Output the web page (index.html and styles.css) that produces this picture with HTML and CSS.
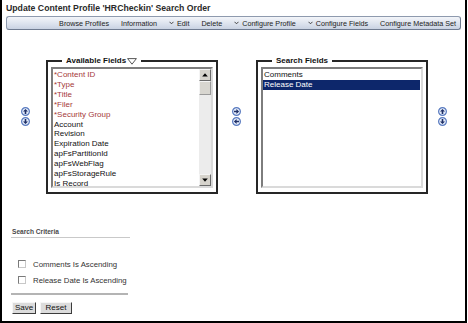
FILE: index.html
```html
<!DOCTYPE html>
<html>
<head>
<meta charset="utf-8">
<link rel="stylesheet" href="styles.css">
</head>
<body>
<div class="page">
  <h1 class="title">Update Content Profile 'HRCheckin' Search Order</h1>
  <nav class="toolbar">
    <span class="tb">Browse Profiles</span>
    <span class="tb">Information</span>
    <span class="tb"><svg class="chev" width="5" height="4" viewBox="0 0 5 4"><polyline points="0.5,0.8 2.5,2.8 4.5,0.8" fill="none" stroke="#333" stroke-width="0.9"/></svg>Edit</span>
    <span class="tb">Delete</span>
    <span class="tb"><svg class="chev" width="5" height="4" viewBox="0 0 5 4"><polyline points="0.5,0.8 2.5,2.8 4.5,0.8" fill="none" stroke="#333" stroke-width="0.9"/></svg>Configure Profile</span>
    <span class="tb"><svg class="chev" width="5" height="4" viewBox="0 0 5 4"><polyline points="0.5,0.8 2.5,2.8 4.5,0.8" fill="none" stroke="#333" stroke-width="0.9"/></svg>Configure Fields</span>
    <span class="tb">Configure Metadata Set</span>
  </nav>

  <div class="fields">
    <div class="movers movers-left">
      <svg class="mv" width="9" height="9" viewBox="0 0 9 9"><circle cx="4.5" cy="4.5" r="3.9" fill="#e4ecfa" stroke="#5b7cc0" stroke-width="1.2"/><path d="M4.5 1.9 L7 4.6 L5.3 4.6 L5.3 7 L3.7 7 L3.7 4.6 L2 4.6 Z" fill="#1f2f66"/></svg>
      <svg class="mv" width="9" height="9" viewBox="0 0 9 9"><circle cx="4.5" cy="4.5" r="3.9" fill="#e4ecfa" stroke="#5b7cc0" stroke-width="1.2"/><path d="M4.5 7.1 L7 4.4 L5.3 4.4 L5.3 2 L3.7 2 L3.7 4.4 L2 4.4 Z" fill="#1f2f66"/></svg>
    </div>

    <fieldset class="group">
      <legend class="lg">Available Fields<svg class="tri" width="10" height="7" viewBox="0 0 10 7"><polygon points="0.6,0.6 9.4,0.6 5,6.2" fill="#fff" stroke="#444" stroke-width="0.9"/></svg></legend>
      <div class="listbox">
        <ul class="items">
          <li class="req">*Content ID</li>
          <li class="req">*Type</li>
          <li class="req">*Title</li>
          <li class="req">*Filer</li>
          <li class="req">*Security Group</li>
          <li>Account</li>
          <li>Revision</li>
          <li>Expiration Date</li>
          <li>apFsPartitionId</li>
          <li>apFsWebFlag</li>
          <li>apFsStorageRule</li>
          <li>Is Record</li>
        </ul>
        <div class="scroll">
          <div class="sbtn"><svg width="6" height="4" viewBox="0 0 6 4"><polygon points="3,0.3 5.8,3.5 0.2,3.5" fill="#000"/></svg></div>
          <div class="thumb"></div>
          <div class="track"></div>
          <div class="sbtn"><svg width="6" height="4" viewBox="0 0 6 4"><polygon points="3,3.7 5.8,0.5 0.2,0.5" fill="#000"/></svg></div>
        </div>
      </div>
    </fieldset>

    <div class="movers movers-mid">
      <svg class="mv" width="9" height="9" viewBox="0 0 9 9"><circle cx="4.5" cy="4.5" r="3.9" fill="#e4ecfa" stroke="#5b7cc0" stroke-width="1.2"/><path d="M7.1 4.5 L4.4 2 L4.4 3.7 L2 3.7 L2 5.3 L4.4 5.3 L4.4 7 Z" fill="#1f2f66"/></svg>
      <svg class="mv" width="9" height="9" viewBox="0 0 9 9"><circle cx="4.5" cy="4.5" r="3.9" fill="#e4ecfa" stroke="#5b7cc0" stroke-width="1.2"/><path d="M1.9 4.5 L4.6 2 L4.6 3.7 L7 3.7 L7 5.3 L4.6 5.3 L4.6 7 Z" fill="#1f2f66"/></svg>
    </div>

    <fieldset class="group">
      <legend class="lg">Search Fields</legend>
      <div class="listbox">
        <ul class="items">
          <li>Comments</li>
          <li class="sel">Release Date</li>
        </ul>
      </div>
    </fieldset>

    <div class="movers movers-right">
      <svg class="mv" width="9" height="9" viewBox="0 0 9 9"><circle cx="4.5" cy="4.5" r="3.9" fill="#e4ecfa" stroke="#5b7cc0" stroke-width="1.2"/><path d="M4.5 1.9 L7 4.6 L5.3 4.6 L5.3 7 L3.7 7 L3.7 4.6 L2 4.6 Z" fill="#1f2f66"/></svg>
      <svg class="mv" width="9" height="9" viewBox="0 0 9 9"><circle cx="4.5" cy="4.5" r="3.9" fill="#e4ecfa" stroke="#5b7cc0" stroke-width="1.2"/><path d="M4.5 7.1 L7 4.4 L5.3 4.4 L5.3 2 L3.7 2 L3.7 4.4 L2 4.4 Z" fill="#1f2f66"/></svg>
    </div>
  </div>

  <section class="criteria">
    <div class="crit-head">Search Criteria</div>
    <label class="chk"><span class="cbox"></span>Comments Is Ascending</label>
    <label class="chk"><span class="cbox"></span>Release Date Is Ascending</label>
    <div class="sep"></div>
    <div class="buttons">
      <button class="btn btn-save">Save</button>
      <button class="btn btn-reset">Reset</button>
    </div>
  </section>
</div>
</body>
</html>
```

FILE: styles.css
```css
html, body {
  margin: 0;
  padding: 0;
  background: #fff;
}

.page {
  width: 467px;
  height: 323px;
  box-sizing: border-box;
  border: 2px solid #000;
  border-top: 0;
  background: #fff;
  font-family: "Liberation Sans", Arial, sans-serif;
  color: #000;
}

.title {
  margin: 0;
  padding: 2px 0 0 4px;
  font-size: 8.7px;
  line-height: 12px;
  font-weight: bold;
  color: #2a2a2a;
}

.toolbar {
  margin: 2px 4px 0 4px;
  height: 14px;
  box-sizing: border-box;
  border: 1px solid #8e9aae;
  border-right-color: #6f7b90;
  border-bottom-color: #6f7b90;
  border-radius: 3px;
  background: linear-gradient(#f3f5f9, #dde3ee 55%, #c9d2e2);
  display: flex;
  justify-content: flex-end;
  align-items: center;
  gap: 12px;
  padding-right: 4px;
  font-size: 7.2px;
  color: #222;
}

.tb {
  display: flex;
  align-items: center;
  white-space: nowrap;
}

.chev {
  margin-right: 3px;
}

.fields {
  display: flex;
  align-items: flex-start;
  margin-top: 26px;
}

.movers {
  display: flex;
  flex-direction: column;
  gap: 1px;
  margin-top: 51px;
}

.mv {
  display: block;
}

.movers-left {
  margin-left: 19px;
  margin-right: 16px;
}

.movers-mid {
  margin-left: 14px;
  margin-right: 15px;
}

.movers-right {
  margin-left: 10px;
}

.group {
  width: 172px;
  box-sizing: border-box;
  margin: 0;
  padding: 0 3px 4px 3px;
  border: 2px solid #262626;
  min-width: 0;
}

.lg {
  margin-left: 11px;
  padding: 0 4px;
  font-size: 8px;
  line-height: 10px;
  font-weight: bold;
  color: #111;
  display: flex;
  align-items: flex-start;
}

.tri {
  margin-left: 1px;
  margin-top: 2px;
}

.listbox {
  margin-top: 1px;
  height: 121px;
  box-sizing: border-box;
  border: 2px solid;
  border-color: #7d7d7d #dadada #dadada #7d7d7d;
  background: #fff;
  display: flex;
}

.items {
  list-style: none;
  margin: 0;
  padding: 1px 1px 0 0;
  flex: 1;
  font-size: 8px;
  line-height: 9.9px;
  color: #111;
}

.items li {
  padding-left: 1px;
  white-space: nowrap;
}

.items .req {
  color: #a53a3a;
}

.items .sel {
  background: #0d276b;
  color: #fff;
}

.scroll {
  width: 12px;
  display: flex;
  flex-direction: column;
  background: #ebebeb;
}

.sbtn {
  height: 12px;
  box-sizing: border-box;
  background: #d6d3cc;
  border: 1px solid;
  border-color: #f4f4f4 #6a6a6a #6a6a6a #f4f4f4;
  display: flex;
  align-items: center;
  justify-content: center;
}

.thumb {
  height: 14px;
  box-sizing: border-box;
  background: #d8d6d0;
  border: 1px solid;
  border-color: #f4f4f4 #9a9a9a #9a9a9a #f4f4f4;
}

.track {
  flex: 1;
  background: #ececec;
}

.criteria {
  padding-left: 9px;
}

.crit-head {
  margin-top: 33px;
  width: 118px;
  padding-left: 1px;
  font-size: 6.6px;
  line-height: 10px;
  font-weight: bold;
  color: #4a4a4a;
  border-bottom: 1px solid #c9c9c9;
}

.chk {
  display: flex;
  align-items: center;
  height: 16px;
  padding-left: 7px;
  font-size: 7.8px;
  color: #333;
}

.chk:first-of-type {
  margin-top: 18px;
}

.cbox {
  width: 8px;
  height: 8px;
  box-sizing: border-box;
  border: 1px solid;
  border-color: #7a7a7a #c8c8c8 #c8c8c8 #7a7a7a;
  background: #fff;
  margin-right: 7px;
}

.sep {
  margin-top: 5px;
  width: 117px;
  height: 2px;
  background: #b4b4b4;
}

.buttons {
  display: flex;
  gap: 4px;
  margin-top: 7px;
  padding-left: 1px;
}

.btn {
  height: 12px;
  box-sizing: border-box;
  padding: 0;
  margin: 0;
  font-family: "Liberation Sans", Arial, sans-serif;
  font-size: 8px;
  line-height: 10px;
  color: #111;
  background: #dcdcdc;
  border: 1px solid;
  border-color: #f6f6f6 #3c3c3c #3c3c3c #f6f6f6;
}

.btn-save {
  width: 24px;
}

.btn-reset {
  width: 32px;
}
```
